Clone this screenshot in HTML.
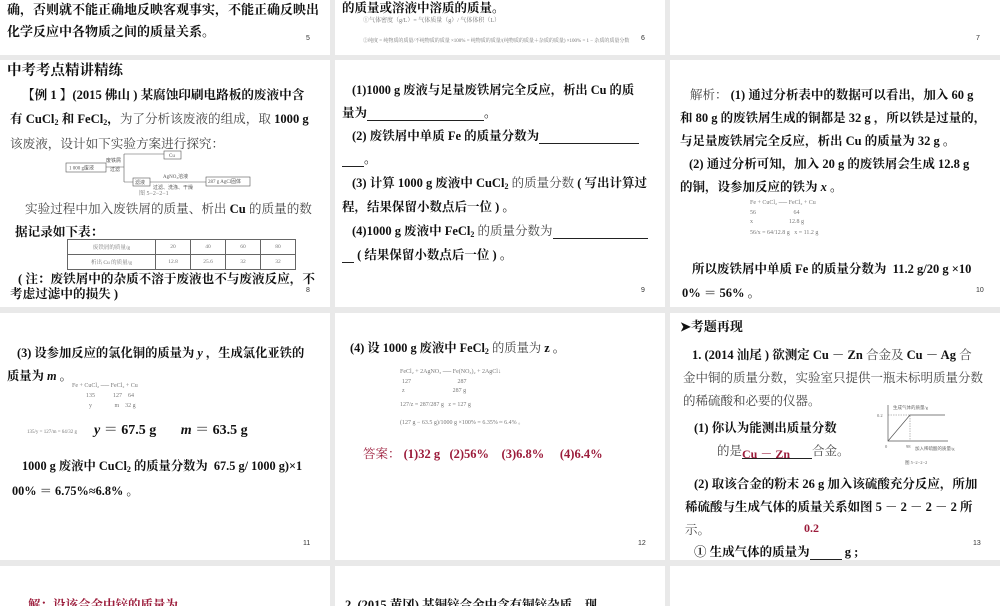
<!DOCTYPE html>
<html><head><meta charset="utf-8"><style>
body{margin:0;width:1000px;height:600px;background:#e9e9e9;overflow:hidden;position:relative;font-family:"Liberation Serif","Noto Serif CJK SC",serif;color:#111}
.s{position:absolute;background:#fff;overflow:hidden}
.t{position:absolute;white-space:nowrap;font-size:13px;font-weight:bold;line-height:16px}
.n{position:absolute;font-size:7px;font-family:"Liberation Sans",sans-serif;color:#333}
.g{position:absolute;white-space:nowrap;font-size:6px;color:#777;line-height:7px}
.r{color:#9b1b3a}
.u{display:inline-block;border-bottom:1px solid #222;height:12px;vertical-align:bottom}
sub{font-size:8px;vertical-align:-2px;line-height:0}
.light{font-weight:normal;color:#444}
</style></head><body>
<!-- row 0 -->
<div class="s" style="left:0;top:0;width:330px;height:55px">
<div class="t" style="left:7px;top:2px;font-size:13px">确，否则就不能正确地反映客观事实，不能正确反映出</div>
<div class="t" style="left:7px;top:24px;font-size:13px">化学反应中各物质之间的质量关系。</div>
<div class="n" style="left:306px;top:35px">5</div></div>
<div class="s" style="left:335px;top:0;width:330px;height:55px">
<div class="t" style="left:7px;top:0px;font-size:12.5px">的质量或溶液中溶质的质量。</div>
<div class="g" style="left:28px;top:18px">①气体密度（g/L）= 气体质量（g）/ 气体体积（L）</div>
<div class="g" style="left:28px;top:38px;font-size:5px">②纯度 = 纯物质的质量/不纯物质的质量 ×100% = 纯物质的质量/(纯物质的质量＋杂质的质量) ×100% = 1 − 杂质的质量分数</div>
<div class="n" style="left:306px;top:35px">6</div></div>
<div class="s" style="left:670px;top:0;width:330px;height:55px"><div class="n" style="left:306px;top:35px">7</div></div>

<!-- row 1 -->
<div class="s" style="left:0;top:60px;width:330px;height:247px">
<div class="t" style="left:7px;top:3px;font-size:14.5px">中考考点精讲精练</div>
<div class="t" style="left:22px;top:27px;font-size:12.6px">【例 1 】(2015 佛山 ) 某腐蚀印刷电路板的废液中含</div>
<div class="t" style="left:10px;top:51px;font-size:12.6px">有 CuCl<sub>2</sub> 和 FeCl<sub>2</sub>，<span class="light">为了分析该废液的组成，取</span> 1000 g</div>
<div class="t light" style="left:10px;top:76px;font-size:12.6px">该废液，设计如下实验方案进行探究：</div>
<svg style="position:absolute;left:60px;top:90px" width="200" height="42" font-size="5" fill="#555" font-family="Liberation Serif">
<rect x="6" y="13" width="40" height="9" fill="none" stroke="#555" stroke-width=".6"/><text x="9" y="19.5">1 000 g废液</text>
<text x="46" y="12">废铁屑</text><text x="50" y="21">过滤</text>
<path d="M46 17h18M64 4v28M64 4h40M64 32h9" stroke="#555" stroke-width=".6" fill="none"/>
<rect x="104" y="1" width="17" height="8" fill="none" stroke="#555" stroke-width=".6"/><text x="109" y="7">Cu</text>
<rect x="73" y="28" width="17" height="8" fill="none" stroke="#555" stroke-width=".6"/><text x="75" y="34">滤液</text>
<path d="M90 32h56" stroke="#555" stroke-width=".6"/><text x="103" y="28">AgNO₃溶液</text><text x="93" y="39">过滤、洗涤、干燥</text>
<rect x="146" y="27" width="44" height="9" fill="none" stroke="#555" stroke-width=".6"/><text x="148" y="33">287 g AgCl固体</text>
</svg>
<div class="g" style="left:139px;top:131px">图 5−2−2−1</div>
<div class="t light" style="left:25px;top:141px;font-size:12.6px">实验过程中加入废铁屑的质量、析出 <b style="color:#111">Cu</b> 的质量的数</div>
<div class="t" style="left:15px;top:164px;font-size:12.6px">据记录如下表：</div>
<table style="position:absolute;left:67px;top:179px;border-collapse:collapse;font-size:5.5px;color:#777;text-align:center" >
<tr><td style="border:.6px solid #666;width:85px;height:12px">废铁屑的质量/g</td><td style="border:.6px solid #666;width:32px">20</td><td style="border:.6px solid #666;width:32px">40</td><td style="border:.6px solid #666;width:32px">60</td><td style="border:.6px solid #666;width:32px">80</td></tr>
<tr><td style="border:.6px solid #666;height:12px">析出 Cu 的质量/g</td><td style="border:.6px solid #666">12.8</td><td style="border:.6px solid #666">25.6</td><td style="border:.6px solid #666">32</td><td style="border:.6px solid #666">32</td></tr></table>
<div class="t" style="left:18px;top:211px;font-size:12.6px">( 注：废铁屑中的杂质不溶于废液也不与废液反应，不</div>
<div class="t" style="left:10px;top:226px;font-size:12.6px">考虑过滤中的损失 )</div>
<div class="n" style="left:306px;top:227px">8</div></div>

<div class="s" style="left:335px;top:60px;width:330px;height:247px">
<div class="t" style="left:17px;top:22px;font-size:12.3px">(1)1000 g 废液与足量废铁屑完全反应，析出 Cu 的质</div>
<div class="t" style="left:7px;top:45px;font-size:12.5px">量为<span class="u" style="width:117px"></span>。</div>
<div class="t" style="left:17px;top:68px;font-size:12.5px">(2) 废铁屑中单质 Fe 的质量分数为<span class="u" style="width:100px"></span></div>
<div class="t" style="left:7px;top:91px;font-size:12.5px"><span class="u" style="width:22px"></span>。</div>
<div class="t" style="left:17px;top:115px;font-size:12.5px">(3) 计算 1000 g 废液中 CuCl<sub>2</sub> <span class="light">的质量分数</span> ( 写出计算过</div>
<div class="t" style="left:7px;top:139px;font-size:12.5px">程，结果保留小数点后一位 ) 。</div>
<div class="t" style="left:17px;top:163px;font-size:12.5px">(4)1000 g 废液中 FeCl<sub>2</sub> <span class="light">的质量分数为</span><span class="u" style="width:95px"></span></div>
<div class="t" style="left:7px;top:187px;font-size:12.5px"><span class="u" style="width:12px"></span> ( 结果保留小数点后一位 ) 。</div>
<div class="n" style="left:306px;top:227px">9</div></div>

<div class="s" style="left:670px;top:60px;width:330px;height:247px">
<div class="t" style="left:20px;top:27px;font-size:12.5px"><span class="light">解析：</span> (1) 通过分析表中的数据可以看出，加入 60 g</div>
<div class="t" style="left:10px;top:50px;font-size:12.5px">和 80 g 的废铁屑生成的铜都是 32 g ，所以铁是过量的，</div>
<div class="t" style="left:10px;top:73px;font-size:12.5px">与足量废铁屑完全反应，析出 Cu 的质量为 32 g 。</div>
<div class="t" style="left:19px;top:96px;font-size:12.5px">(2) 通过分析可知，加入 20 g 的废铁屑会生成 12.8 g</div>
<div class="t" style="left:10px;top:119px;font-size:12.5px">的铜，设参加反应的铁为 <i>x</i> 。</div>
<div class="g" style="left:80px;top:140px">Fe + CuCl₂ ── FeCl₂ + Cu</div>
<div class="g" style="left:80px;top:150px">56&nbsp;&nbsp;&nbsp;&nbsp;&nbsp;&nbsp;&nbsp;&nbsp;&nbsp;&nbsp;&nbsp;&nbsp;&nbsp;&nbsp;&nbsp;&nbsp;&nbsp;&nbsp;&nbsp;&nbsp;&nbsp;&nbsp;&nbsp;&nbsp;&nbsp;64</div>
<div class="g" style="left:80px;top:159px">x&nbsp;&nbsp;&nbsp;&nbsp;&nbsp;&nbsp;&nbsp;&nbsp;&nbsp;&nbsp;&nbsp;&nbsp;&nbsp;&nbsp;&nbsp;&nbsp;&nbsp;&nbsp;&nbsp;&nbsp;&nbsp;&nbsp;&nbsp;&nbsp;12.8 g</div>
<div class="g" style="left:80px;top:170px">56/x = 64/12.8 g&nbsp;&nbsp;&nbsp;x = 11.2 g</div>
<div class="t" style="left:22px;top:201px;font-size:12.5px">所以废铁屑中单质 Fe 的质量分数为&nbsp;&nbsp;11.2 g/20 g ×10</div>
<div class="t" style="left:12px;top:225px;font-size:12.5px">0% ＝ 56% 。</div>
<div class="n" style="left:306px;top:227px">10</div></div>

<!-- row 2 -->
<div class="s" style="left:0;top:313px;width:330px;height:247px">
<div class="t" style="left:17px;top:32px;font-size:12.3px">(3) 设参加反应的氯化铜的质量为 <i>y</i> ，生成氯化亚铁的</div>
<div class="t" style="left:7px;top:55px;font-size:12.3px">质量为 <i>m</i> 。</div>
<div class="g" style="left:72px;top:70px">Fe + CuCl₂ ── FeCl₂ + Cu</div>
<div class="g" style="left:86px;top:80px">135&nbsp;&nbsp;&nbsp;&nbsp;&nbsp;&nbsp;&nbsp;&nbsp;&nbsp;&nbsp;&nbsp;&nbsp;127&nbsp;&nbsp;&nbsp;&nbsp;64</div>
<div class="g" style="left:89px;top:90px">y&nbsp;&nbsp;&nbsp;&nbsp;&nbsp;&nbsp;&nbsp;&nbsp;&nbsp;&nbsp;&nbsp;&nbsp;&nbsp;&nbsp;&nbsp;m&nbsp;&nbsp;&nbsp;&nbsp;32 g</div>
<div class="g" style="left:27px;top:116px;font-size:5px">135/y = 127/m = 64/32 g</div>
<div class="t" style="left:94px;top:110px;font-size:14px"><i>y</i> ＝ 67.5 g&nbsp;&nbsp;&nbsp;&nbsp;&nbsp;&nbsp;&nbsp;<i>m</i> ＝ 63.5 g</div>
<div class="t" style="left:22px;top:145px;font-size:12.3px">1000 g 废液中 CuCl<sub>2</sub> 的质量分数为&nbsp;&nbsp;67.5 g/ 1000 g)×1</div>
<div class="t" style="left:12px;top:170px;font-size:12.3px">00% ＝ 6.75%≈6.8% 。</div>
<div class="n" style="left:303px;top:227px">11</div></div>

<div class="s" style="left:335px;top:313px;width:330px;height:247px">
<div class="t" style="left:15px;top:27px;font-size:12.3px">(4) 设 1000 g 废液中 FeCl<sub>2</sub> <span class="light">的质量为</span> z 。</div>
<div class="g" style="left:65px;top:56px">FeCl₂ + 2AgNO₃ ── Fe(NO₃)₂ + 2AgCl↓</div>
<div class="g" style="left:67px;top:66px">127&nbsp;&nbsp;&nbsp;&nbsp;&nbsp;&nbsp;&nbsp;&nbsp;&nbsp;&nbsp;&nbsp;&nbsp;&nbsp;&nbsp;&nbsp;&nbsp;&nbsp;&nbsp;&nbsp;&nbsp;&nbsp;&nbsp;&nbsp;&nbsp;&nbsp;&nbsp;&nbsp;&nbsp;&nbsp;&nbsp;&nbsp;287</div>
<div class="g" style="left:67px;top:75px">z&nbsp;&nbsp;&nbsp;&nbsp;&nbsp;&nbsp;&nbsp;&nbsp;&nbsp;&nbsp;&nbsp;&nbsp;&nbsp;&nbsp;&nbsp;&nbsp;&nbsp;&nbsp;&nbsp;&nbsp;&nbsp;&nbsp;&nbsp;&nbsp;&nbsp;&nbsp;&nbsp;&nbsp;&nbsp;&nbsp;&nbsp;&nbsp;287 g</div>
<div class="g" style="left:65px;top:89px">127/z = 287/287 g&nbsp;&nbsp;&nbsp;z = 127 g</div>
<div class="g" style="left:65px;top:107px">(127 g − 63.5 g)/1000 g ×100% = 6.35% ≈ 6.4% 。</div>
<div class="t r" style="left:28px;top:133px;font-size:12.5px"><span style="font-weight:normal">答案：</span> (1)32 g&nbsp;&nbsp;&nbsp;(2)56%&nbsp;&nbsp;&nbsp;&nbsp;(3)6.8%&nbsp;&nbsp;&nbsp;&nbsp;&nbsp;(4)6.4%</div>
<div class="n" style="left:303px;top:227px">12</div></div>

<div class="s" style="left:670px;top:313px;width:330px;height:247px">
<div class="t" style="left:10px;top:6px;font-size:13px">➤考题再现</div>
<div class="t" style="left:22px;top:34px;font-size:12.5px">1. (2014 汕尾 ) 欲测定 Cu － Zn <span class="light">合金及</span> Cu － Ag <span class="light">合</span></div>
<div class="t light" style="left:13px;top:57px;font-size:12.5px">金中铜的质量分数，实验室只提供一瓶未标明质量分数</div>
<div class="t light" style="left:13px;top:80px;font-size:12.5px">的稀硫酸和必要的仪器。</div>
<svg style="position:absolute;left:205px;top:90px" width="90" height="65" font-size="4.5" fill="#666" font-family="Liberation Serif">
<path d="M13 2v36h60" stroke="#555" stroke-width=".7" fill="none"/><path d="M13 38l22-26h35" stroke="#555" stroke-width=".7" fill="none"/>
<path d="M13 12h22v26" stroke="#777" stroke-width=".5" stroke-dasharray="1.5 1" fill="none"/>
<text x="18" y="6">生成气体的质量/g</text><text x="2" y="14">0.2</text><text x="10" y="45">0</text><text x="31" y="45">98</text><text x="40" y="47">加入稀硫酸的质量/g</text><text x="30" y="61">图 5−2−2−2</text></svg>
<div class="t" style="left:24px;top:107px;font-size:12.5px">(1) 你认为能测出质量分数</div>
<div class="t" style="left:47px;top:130px;font-size:12.5px"><span class="light">的是</span><span class="u r" style="width:70px;font-size:12px">Cu － Zn</span><span class="light">合金。</span></div>
<div class="t" style="left:24px;top:163px;font-size:12.5px">(2) 取该合金的粉末 26 g 加入该硫酸充分反应，所加</div>
<div class="t" style="left:15px;top:186px;font-size:12.5px">稀硫酸与生成气体的质量关系如图 5 － 2 － 2 － 2 所</div>
<div class="t light" style="left:15px;top:209px;font-size:12.5px">示。</div>
<div class="t r" style="left:134px;top:207px;font-size:12px">0.2</div>
<div class="t" style="left:24px;top:231px;font-size:12.5px">① 生成气体的质量为<span class="u" style="width:32px"></span> g ;</div>
<div class="n" style="left:303px;top:227px">13</div></div>

<!-- row 3 -->
<div class="s" style="left:0;top:566px;width:330px;height:40px"><div class="t r" style="left:28px;top:31px;font-size:12.5px">解：设该合金中锌的质量为</div></div>
<div class="s" style="left:335px;top:566px;width:330px;height:40px"><div class="t" style="left:10px;top:31px;font-size:12.5px">2. (2015 黄冈) 某铜锌合金中含有铜锌杂质，现</div></div>
<div class="s" style="left:670px;top:566px;width:330px;height:40px"></div>
</body></html>
